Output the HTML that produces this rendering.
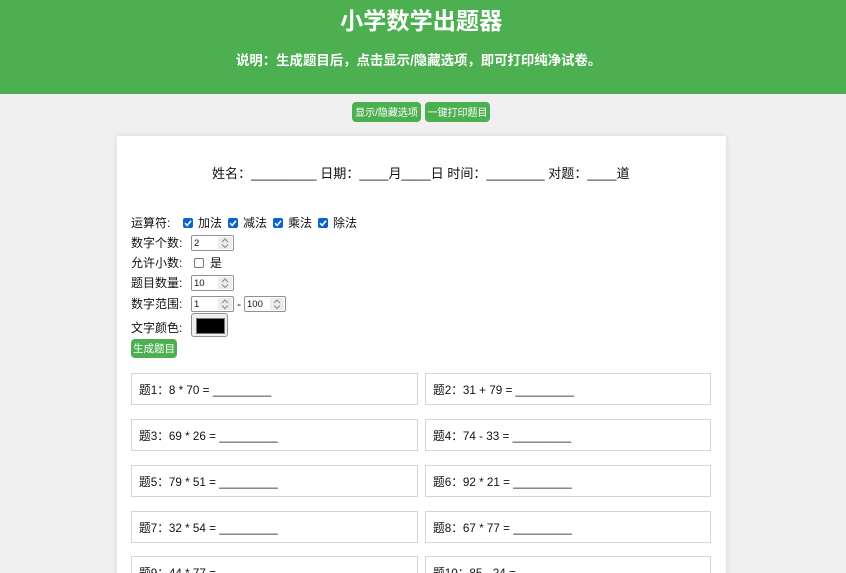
<!DOCTYPE html>
<html lang="zh">
<head>
<meta charset="utf-8">
<style>
html,body{margin:0;padding:0;width:846px;height:573px;overflow:hidden}
body{background:#f0f0f0;font-family:"Liberation Sans","Noto Sans CJK SC",sans-serif;color:#111}
#w{position:absolute;left:0;top:0;width:846px;height:573px;overflow:hidden}
.a{position:absolute;white-space:nowrap}
#hd{position:absolute;left:0;top:0;width:846px;height:94px;background:#4caf50}
.t{color:#fff;font-weight:bold}
.btn{position:absolute;background:#4caf50;color:#fff;border-radius:4px;font-size:10px;line-height:23px;height:20px;text-align:center}
#card{position:absolute;left:117px;top:136px;width:609px;height:460px;background:#fff;box-shadow:0 0 6px rgba(0,0,0,.1)}
.l{font-size:12px;line-height:16px;color:#111}
.cb{position:absolute;width:10px;height:10px;background:#0b63ce;border-radius:2px}
.cb svg{position:absolute;left:0;top:0}
.num{position:absolute;height:14px;border:1px solid #8f8f9d;border-radius:2px;background:#fff;font-size:9.5px;line-height:14px;color:#111;box-sizing:content-box}
.num span{position:absolute;left:2px;top:1px}
.spin{position:absolute;right:1px;top:1px;width:14px;height:12px;background:#ececec}
.spin svg{position:absolute;left:3px;top:0}
.q{position:absolute;height:30px;border:1px solid #d5d5d5;box-sizing:content-box;background:#fff;font-size:11.7px;line-height:33px;color:#111}
.q span{position:absolute;left:7px;top:0;white-space:nowrap}
.L{left:131px;width:285px}
.R{left:425px;width:284px}
</style>
</head>
<body>
<div id="w">
<div id="hd"></div>
<div class="a t" style="left:340px;top:3px;font-size:23.2px;line-height:36px">小学数学出题器</div>
<div class="a t" style="left:236px;top:50px;font-size:13.4px;line-height:21px">说明：生成题目后，点击显示/隐藏选项，即可打印纯净试卷。</div>
<div class="btn" style="left:352px;top:102px;width:69px">显示/隐藏选项</div>
<div class="btn" style="left:425px;top:102px;width:65px">一键打印题目</div>

<div id="card"></div>
<div class="a" style="left:212px;top:164px;font-size:13.07px;line-height:20px;color:#111">姓名：_________ 日期：____月____日 时间：________ 对题：____道</div>

<div class="a l" style="left:131px;top:215px">运算符:</div>
<div class="cb" style="left:183px;top:218px"><svg width="10" height="10" viewBox="0 0 10 10"><path d="M2 5.2 4.2 7.4 8 2.8" fill="none" stroke="#fff" stroke-width="1.6"/></svg></div>
<div class="a l" style="left:198px;top:215px">加法</div>
<div class="cb" style="left:228px;top:218px"><svg width="10" height="10" viewBox="0 0 10 10"><path d="M2 5.2 4.2 7.4 8 2.8" fill="none" stroke="#fff" stroke-width="1.6"/></svg></div>
<div class="a l" style="left:243px;top:215px">减法</div>
<div class="cb" style="left:273px;top:218px"><svg width="10" height="10" viewBox="0 0 10 10"><path d="M2 5.2 4.2 7.4 8 2.8" fill="none" stroke="#fff" stroke-width="1.6"/></svg></div>
<div class="a l" style="left:288px;top:215px">乘法</div>
<div class="cb" style="left:318px;top:218px"><svg width="10" height="10" viewBox="0 0 10 10"><path d="M2 5.2 4.2 7.4 8 2.8" fill="none" stroke="#fff" stroke-width="1.6"/></svg></div>
<div class="a l" style="left:333px;top:215px">除法</div>

<div class="a l" style="left:131px;top:235px">数字个数:</div>
<div class="num" style="left:191px;top:235px;width:41px"><span>2</span><div class="spin"><svg width="8" height="12" viewBox="0 0 8 12"><path d="M1 5 4 2 7 5M1 7.5 4 10.5 7 7.5" fill="none" stroke="#888" stroke-width="1"/></svg></div></div>

<div class="a l" style="left:131px;top:255px">允许小数:</div>
<div class="a" style="left:194px;top:258px;width:8px;height:8px;border:1px solid #767676;border-radius:2px;background:#fff"></div>
<div class="a l" style="left:210px;top:255px">是</div>

<div class="a l" style="left:131px;top:275px">题目数量:</div>
<div class="num" style="left:191px;top:275px;width:41px"><span>10</span><div class="spin"><svg width="8" height="12" viewBox="0 0 8 12"><path d="M1 5 4 2 7 5M1 7.5 4 10.5 7 7.5" fill="none" stroke="#888" stroke-width="1"/></svg></div></div>

<div class="a l" style="left:131px;top:296px">数字范围:</div>
<div class="num" style="left:191px;top:296px;width:41px"><span>1</span><div class="spin"><svg width="8" height="12" viewBox="0 0 8 12"><path d="M1 5 4 2 7 5M1 7.5 4 10.5 7 7.5" fill="none" stroke="#888" stroke-width="1"/></svg></div></div>
<div class="a l" style="left:237px;top:296px">-</div>
<div class="num" style="left:244px;top:296px;width:40px"><span>100</span><div class="spin"><svg width="8" height="12" viewBox="0 0 8 12"><path d="M1 5 4 2 7 5M1 7.5 4 10.5 7 7.5" fill="none" stroke="#888" stroke-width="1"/></svg></div></div>

<div class="a l" style="left:131px;top:320px">文字颜色:</div>
<div class="a" style="left:191px;top:313px;width:35px;height:22px;border:1px solid #8f8f9d;border-radius:3px;background:#efefef"></div>
<div class="a" style="left:196px;top:318px;width:27px;height:14px;background:#000;border:1px solid #777"></div>
<div class="btn" style="left:131px;top:339px;width:46px;height:19px;line-height:21px;font-size:10.5px">生成题目</div>

<div class="q L" style="top:373px"><span>题1：8 * 70 = _________</span></div>
<div class="q R" style="top:373px"><span>题2：31 + 79 = _________</span></div>
<div class="q L" style="top:419px"><span>题3：69 * 26 = _________</span></div>
<div class="q R" style="top:419px"><span>题4：74 - 33 = _________</span></div>
<div class="q L" style="top:465px"><span>题5：79 * 51 = _________</span></div>
<div class="q R" style="top:465px"><span>题6：92 * 21 = _________</span></div>
<div class="q L" style="top:511px"><span>题7：32 * 54 = _________</span></div>
<div class="q R" style="top:511px"><span>题8：67 * 77 = _________</span></div>
<div class="q L" style="top:556px"><span>题9：44 * 77 = _________</span></div>
<div class="q R" style="top:556px"><span>题10：85 - 24 = _________</span></div>
</div>
</body>
</html>
